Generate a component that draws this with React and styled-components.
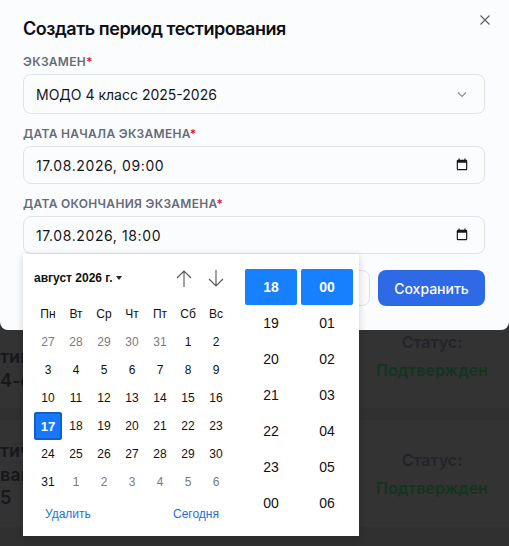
import styled, { createGlobalStyle } from "styled-components";

const GlobalStyle = createGlobalStyle`
  html, body {
    margin: 0;
    padding: 0;
    background: #333333;
    font-family: Inter, "Liberation Sans", sans-serif;
  }
  * { box-sizing: border-box; }
`;

const Page = styled.div`
  position: relative;
  width: 509px;
  height: 546px;
  overflow: hidden;
  background: #303030;
`;

// list of exams dimmed behind the dialog
const Backdrop = styled.div`
  padding-top: 328px;
  display: flex;
  flex-direction: column;
  gap: 12px;
`;

const BgRow = styled.div`
  height: ${(p) => p.$h}px;
  display: flex;
  justify-content: space-between;
  background: #333333;
`;

const BgName = styled.div`
  width: 23px;
  padding-top: ${(p) => p.$top}px;
  font-size: 18px;
  font-weight: 600;
  line-height: 23.5px;
  color: #17181c;
  white-space: nowrap;
`;

const BgStatus = styled.div`
  width: 150px;
  margin-right: 2px;
  padding-top: ${(p) => p.$top}px;
  text-align: center;
  font-size: 16px;
  font-weight: 600;
  line-height: 28px;
  color: #22242a;
`;

const BgGreen = styled.div`
  color: #12351f;
`;

const Modal = styled.div`
  position: absolute;
  left: 0;
  top: 0;
  width: 509px;
  height: 330px;
  background: #fbfcfe;
  border-radius: 0 0 8px 8px;
  padding: 18px 24px 0 23px;
`;

const Close = styled.button`
  position: absolute;
  top: 14px;
  right: 18px;
  padding: 0;
  border: none;
  background: none;
  color: #5f6470;
  display: flex;
`;

const Title = styled.h2`
  margin: 0 0 14px;
  font-size: 18px;
  line-height: 22px;
  font-weight: 600;
  letter-spacing: -0.47px;
  color: #0d0f14;
`;

const Field = styled.div`
  margin-bottom: 12px;
`;

const Label = styled.label`
  display: block;
  margin-bottom: 5px;
  font-size: 12px;
  line-height: 15px;
  font-weight: 600;
  letter-spacing: 0.3px;
  text-transform: uppercase;
  color: #666b7a;
`;

const Star = styled.span`
  color: #e8143c;
`;

const Control = styled.div`
  height: ${(p) => p.$h}px;
  display: flex;
  align-items: center;
  justify-content: space-between;
  padding: 0 15px 0 12px;
  border: 1px solid #e0e3e9;
  border-radius: 8px;
  background: #fbfcfe;
  font-size: 14px;
  letter-spacing: ${(p) => p.$sp || 0}px;
  color: #14161b;
`;

const Footer = styled.div`
  position: absolute;
  top: 270px;
  right: 24px;
  display: flex;
  gap: 8px;
`;

const CancelBtn = styled.button`
  width: 120px;
  height: 36px;
  border: 1px solid #e0e3e9;
  border-radius: 8px;
  background: #fbfcfe;
`;

const SaveBtn = styled.button`
  width: 107px;
  height: 36px;
  border: none;
  border-radius: 8px;
  background: #2f6ae6;
  font: 500 14px Inter, sans-serif;
  color: #fdfeff;
`;

// native datetime popup
const Picker = styled.div`
  position: absolute;
  left: 23px;
  top: 254px;
  width: 336px;
  height: 282px;
  background: #ffffff;
  box-shadow: 0 2px 8px rgba(0, 0, 0, 0.18);
  display: flex;
  font-family: "Liberation Sans", Arial, sans-serif;
  color: #111;
`;

const CalendarSide = styled.div`
  width: 215px;
  padding: 11px 0 0 11px;
`;

const CalHeader = styled.div`
  height: 26px;
  display: flex;
  align-items: center;
  justify-content: space-between;
  padding-right: 14px;
`;

const Month = styled.div`
  display: flex;
  align-items: center;
  gap: 4px;
  font-size: 12px;
  font-weight: 700;
`;

const Caret = styled.span`
  width: 0;
  height: 0;
  border-left: 3.5px solid transparent;
  border-right: 3.5px solid transparent;
  border-top: 4px solid #222;
`;

const Arrows = styled.div`
  display: flex;
  gap: 16px;
  color: #555;
`;

const Grid = styled.div`
  margin-top: 9px;
  display: grid;
  grid-template-columns: repeat(7, 28px);
  grid-auto-rows: 28px;
`;

const Cell = styled.div`
  display: flex;
  align-items: center;
  justify-content: center;
  font-size: 12px;
  color: ${(p) => (p.$muted ? "#7b7b7b" : "#111")};
  ${(p) =>
    p.$selected &&
    `
    background: #1678ff;
    color: #fff;
    font-weight: 700;
    font-size: 13px;
    border: 2px solid #0f5fd0;
    border-radius: 2px;
  `}
`;

const CalFooter = styled.div`
  margin-top: 8px;
  display: flex;
  justify-content: space-between;
  padding: 0 19px 0 11px;
  font-size: 12px;
  line-height: 20px;
  color: #1a73d9;
`;

const TimeSide = styled.div`
  display: flex;
  gap: 4px;
  padding: 15px 0 0 7px;
`;

const TimeCol = styled.div`
  width: 52px;
`;

const TimeCell = styled.div`
  height: 36px;
  display: flex;
  align-items: center;
  justify-content: center;
  font-size: 14px;
  ${(p) =>
    p.$selected &&
    `
    background: #1780ff;
    color: #fff;
    font-weight: 700;
    border-radius: 2px;
  `}
`;

const weekDays = ["Пн", "Вт", "Ср", "Чт", "Пт", "Сб", "Вс"];
const days = [
  ...[27, 28, 29, 30, 31].map((d) => ({ d, muted: true })),
  ...Array.from({ length: 31 }, (_, i) => ({ d: i + 1 })),
  ...[1, 2, 3, 4, 5, 6].map((d) => ({ d, muted: true })),
];
const hours = ["18", "19", "20", "21", "22", "23", "00"];
const minutes = ["00", "01", "02", "03", "04", "05", "06"];

const CalendarIcon = () => (
  <svg width="14" height="14" viewBox="0 0 24 24" fill="#15171c">
    <path d="M19 3h-1V1h-2v2H8V1H6v2H5a2 2 0 0 0-2 2v14a2 2 0 0 0 2 2h14a2 2 0 0 0 2-2V5a2 2 0 0 0-2-2zm0 16H5V8h14v11z" />
  </svg>
);

const ArrowUp = () => (
  <svg width="16" height="17" viewBox="0 0 16 17" fill="none" stroke="currentColor" strokeWidth="1.1">
    <path d="M8 17V1M1 8l7-7 7 7" />
  </svg>
);

const ArrowDown = () => (
  <svg width="16" height="17" viewBox="0 0 16 17" fill="none" stroke="currentColor" strokeWidth="1.1">
    <path d="M8 0v16M1 9l7 7 7-7" />
  </svg>
);

export default function App() {
  return (
    <Page>
      <GlobalStyle />
      <Backdrop>
        <BgRow $h={80}>
          <BgName $top={17}>
            тик
            <br />
            4-с
          </BgName>
          <BgStatus $top={0}>
            Статус:
            <BgGreen>Подтвержден</BgGreen>
          </BgStatus>
        </BgRow>
        <BgRow $h={107}>
          <BgName $top={19}>
            тич
            <br />
            ван
            <br />5
          </BgName>
          <BgStatus $top={26}>
            Статус:
            <BgGreen>Подтвержден</BgGreen>
          </BgStatus>
        </BgRow>
      </Backdrop>

      <Modal>
        <Close aria-label="Закрыть">
          <svg width="12" height="12" viewBox="0 0 12 12" fill="none" stroke="currentColor" strokeWidth="1.2">
            <path d="M1.5 1.5l9 9M10.5 1.5l-9 9" />
          </svg>
        </Close>
        <Title>Создать период тестирования</Title>
        <Field>
          <Label>
            Экзамен<Star>*</Star>
          </Label>
          <Control $h={40}>
            МОДО 4 класс 2025-2026
            <svg width="14" height="14" viewBox="0 0 14 14" fill="none" stroke="#8a8f9a" strokeWidth="1.2">
              <path d="M3 5.5l4 4 4-4" />
            </svg>
          </Control>
        </Field>
        <Field>
          <Label>
            Дата начала экзамена<Star>*</Star>
          </Label>
          <Control $h={38} $sp={0.6}>
            17.08.2026, 09:00
            <CalendarIcon />
          </Control>
        </Field>
        <Field>
          <Label>
            Дата окончания экзамена<Star>*</Star>
          </Label>
          <Control $h={38} $sp={0.6}>
            17.08.2026, 18:00
            <CalendarIcon />
          </Control>
        </Field>
        <Footer>
          <CancelBtn />
          <SaveBtn>Сохранить</SaveBtn>
        </Footer>
      </Modal>

      <Picker>
        <CalendarSide>
          <CalHeader>
            <Month>
              август 2026 г.
              <Caret />
            </Month>
            <Arrows>
              <ArrowUp />
              <ArrowDown />
            </Arrows>
          </CalHeader>
          <Grid>
            {weekDays.map((w) => (
              <Cell key={w}>{w}</Cell>
            ))}
            {days.map((c, i) => (
              <Cell key={i} $muted={c.muted} $selected={!c.muted && c.d === 17}>
                {c.d}
              </Cell>
            ))}
          </Grid>
          <CalFooter>
            <span>Удалить</span>
            <span>Сегодня</span>
          </CalFooter>
        </CalendarSide>
        <TimeSide>
          <TimeCol>
            {hours.map((h, i) => (
              <TimeCell key={h} $selected={i === 0}>
                {h}
              </TimeCell>
            ))}
          </TimeCol>
          <TimeCol>
            {minutes.map((m, i) => (
              <TimeCell key={m} $selected={i === 0}>
                {m}
              </TimeCell>
            ))}
          </TimeCol>
        </TimeSide>
      </Picker>
    </Page>
  );
}
